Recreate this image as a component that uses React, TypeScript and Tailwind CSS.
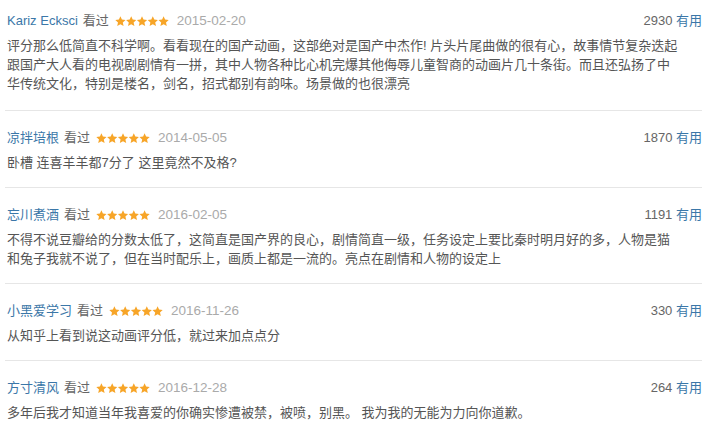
const reviews = [
  {
    name: 'Kariz Ecksci',
    date: '2015-02-20',
    votes: 2930,
    text: '评分那么低简直不科学啊。看看现在的国产动画，这部绝对是国产中杰作! 片头片尾曲做的很有心，故事情节复杂迭起跟国产大人看的电视剧剧情有一拼，其中人物各种比心机完爆其他侮辱儿童智商的动画片几十条街。而且还弘扬了中华传统文化，特别是楼名，剑名，招式都别有韵味。场景做的也很漂亮',
  },
  { name: '凉拌培根', date: '2014-05-05', votes: 1870, text: '卧槽 连喜羊羊都7分了 这里竟然不及格?' },
  {
    name: '忘川煮酒',
    date: '2016-02-05',
    votes: 1191,
    text: '不得不说豆瓣给的分数太低了，这简直是国产界的良心，剧情简直一级，任务设定上要比秦时明月好的多，人物是猫和兔子我就不说了，但在当时配乐上，画质上都是一流的。亮点在剧情和人物的设定上',
  },
  { name: '小黑爱学习', date: '2016-11-26', votes: 330, text: '从知乎上看到说这动画评分低，就过来加点点分' },
  { name: '方寸清风', date: '2016-12-28', votes: 264, text: '多年后我才知道当年我喜爱的你确实惨遭被禁，被喷，别黑。 我为我的无能为力向你道歉。' },
];

function Stars() {
  return (
    <svg width="54" height="11" viewBox="0 0 54 11" className="ml-[6px] mr-[8px] shrink-0">
      {[0, 1, 2, 3, 4].map((i) => (
        <path
          key={i}
          transform={`translate(${i * 10.8} 0)`}
          d="M5.4 0.3 L6.9 3.6 L10.5 4 L7.8 6.4 L8.6 10 L5.4 8.2 L2.2 10 L3 6.4 L0.3 4 L3.9 3.6 Z"
          fill="#f7a528"
        />
      ))}
    </svg>
  );
}

export default function App() {
  return (
    <div
      className="w-[720px] h-[430px] bg-white overflow-hidden pl-[5px] pr-[18px] text-[13px]"
      style={{ fontFamily: "'Liberation Sans', Arial, 'Noto Sans CJK SC', sans-serif" }}
    >
      {reviews.map((r, i) => (
        <div
          key={i}
          className={
            i === 0
              ? 'pt-[11px] pb-[17px]'
              : 'border-t border-[#e6e6e6] pt-[17px] pb-[15px]'
          }
        >
          <div className="flex items-center h-5 pl-[2px]">
            <span className="text-[#3b77a8]">{r.name}</span>
            <span className="text-[#666] ml-[5px]">看过</span>
            <Stars />
            <span className="text-[#aaa] text-[13.5px]">{r.date}</span>
            <span className="ml-auto text-[#666]">
              {r.votes} <span className="text-[#3b77a8]">有用</span>
            </span>
          </div>
          <p className="mt-[5px] pl-[2px] pr-[20px] leading-[19px] text-[#555]">{r.text}</p>
        </div>
      ))}
    </div>
  );
}
